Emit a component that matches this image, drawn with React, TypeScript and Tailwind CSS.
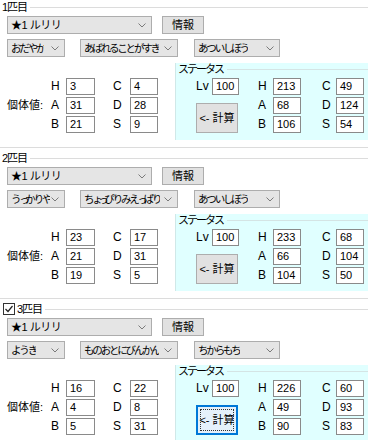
import React from "react";

type Mon = {
  no: string;
  checkbox?: boolean;
  natures: [string, string, string];
  iv: number[];
  st: number[];
  focus?: boolean;
};

const mons: Mon[] = [
  {
    no: "1匹目",
    natures: ["おだやか", "あばれることがすき", "あついしぼう"],
    iv: [3, 31, 21, 4, 28, 9],
    st: [213, 68, 106, 49, 124, 54],
  },
  {
    no: "2匹目",
    natures: ["うっかりや", "ちょっぴりみえっぱり", "あついしぼう"],
    iv: [23, 21, 19, 17, 31, 5],
    st: [233, 66, 104, 68, 104, 50],
  },
  {
    no: "3匹目",
    checkbox: true,
    natures: ["ようき", "ものおとにびんかん", "ちからもち"],
    iv: [16, 4, 5, 22, 8, 31],
    st: [226, 49, 90, 60, 93, 83],
    focus: true,
  },
];

const SMALL = "ぁぃぅぇぉっゃゅょ";

// the original font has proportional kana; fake it by squeezing, small kana more
function Kana({ text }: { text: string }) {
  return (
    <>
      {Array.from(text).map((ch, i) => (
        <span key={i} className={SMALL.includes(ch) ? "tracking-[-4.5px]" : "tracking-[-2.2px]"}>
          {ch}
        </span>
      ))}
    </>
  );
}

function Chevron() {
  return (
    <svg width="8" height="5" viewBox="0 0 8 5" className="shrink-0">
      <path d="M0.5 0.5 L4 4 L7.5 0.5" stroke="#7a7a7a" fill="none" />
    </svg>
  );
}

function Combo({ w, children, className = "" }: { w: string; children: React.ReactNode; className?: string }) {
  return (
    <div
      className={`${w} ${className} flex h-[18px] items-center justify-between border border-[#adadad] bg-[#e5e5e5] pl-[3px] pr-[5px] leading-[16px] whitespace-nowrap`}
    >
      <span className="min-w-0 overflow-hidden">{children}</span>
      <Chevron />
    </div>
  );
}

function Field({ label, value, lw, iw }: { label: string; value: number; lw: string; iw: string }) {
  return (
    <div className="flex h-[17px] items-center text-[12px]">
      <span className={`${lw} leading-[17px]`}>{label}</span>
      <div className={`${iw} h-[17px] border border-[#8a8a8a] bg-white pl-[3px] text-[11px] leading-[15px]`}>{value}</div>
    </div>
  );
}

function Section({ m }: { m: Mon }) {
  return (
    <section className="pb-[3px]">
      <div className="flex h-[14px] items-center">
        {m.checkbox && (
          <div className="ml-[3px] flex h-[12px] w-[12px] items-center justify-center border border-[#333] bg-white">
            <svg width="10" height="10" viewBox="0 0 10 10">
              <path d="M1.5 5 L4 7.5 L8.5 2" stroke="#222" strokeWidth="1.2" fill="none" />
            </svg>
          </div>
        )}
        <span className="ml-[2px] leading-[14px] tracking-[-1px]">{m.no}</span>
        <div className="ml-[3px] h-px flex-1 bg-[#dcdcdc]" />
      </div>

      <div className="mt-[2px] flex pl-[7px]">
        <Combo w="w-[145px]">
          <span className="tracking-[-0.5px]">★1 ルリリ</span>
        </Combo>
        <div className="ml-[10px] flex h-[18px] w-[42px] items-center justify-center border border-[#adadad] bg-[#e1e1e1]">
          情報
        </div>
      </div>

      <div className="mt-[5px] flex pl-[7px] text-[10.5px]">
        <Combo w="w-[58px]">
          <Kana text={m.natures[0]} />
        </Combo>
        <Combo w="w-[98px]" className="ml-[15px]">
          <Kana text={m.natures[1]} />
        </Combo>
        <Combo w="w-[86px]" className="ml-[16px]">
          <Kana text={m.natures[2]} />
        </Combo>
      </div>

      <div className="mt-[6px] flex h-[77px]">
        <div className="flex w-[175px] pl-[7px] pt-[15px]">
          <span className="mt-[19px] w-[44px] leading-[17px]">個体値:</span>
          <div className="flex flex-col gap-[2px]">
            <Field label="H" value={m.iv[0]} lw="w-[15px]" iw="w-[29px]" />
            <Field label="A" value={m.iv[1]} lw="w-[15px]" iw="w-[29px]" />
            <Field label="B" value={m.iv[2]} lw="w-[15px]" iw="w-[29px]" />
          </div>
          <div className="ml-[18px] flex flex-col gap-[2px]">
            <Field label="C" value={m.iv[3]} lw="w-[17px]" iw="w-[28px]" />
            <Field label="D" value={m.iv[4]} lw="w-[17px]" iw="w-[28px]" />
            <Field label="S" value={m.iv[5]} lw="w-[17px]" iw="w-[28px]" />
          </div>
        </div>

        <div className="flex-1 border-l border-[#d0e8e8] bg-[#e0ffff]">
          <div className="flex h-[12px] items-center">
            <span className="pl-[2px] leading-[12px] tracking-[-2px]">ステータス</span>
            <div className="ml-[4px] h-px flex-1 bg-[#d4e4e4]" />
          </div>
          <div className="mt-[3px] flex pl-[20px]">
            <div className="flex flex-col">
              <Field label="Lv" value={100} lw="w-[16px]" iw="w-[27px]" />
              <div
                className={
                  m.focus
                    ? "mt-[8px] flex h-[30px] w-[42px] items-center justify-center whitespace-nowrap border-2 border-[#0078d7] bg-[#e5f1fb] outline-1 outline-dotted outline-offset-[-5px] outline-[#333]"
                    : "mt-[8px] flex h-[30px] w-[42px] items-center justify-center whitespace-nowrap border border-[#adadad] bg-[#e1e1e1]"
                }
              >
                &lt;- 計算
              </div>
            </div>
            <div className="ml-[19px] flex flex-col gap-[2px]">
              <Field label="H" value={m.st[0]} lw="w-[15px]" iw="w-[28px]" />
              <Field label="A" value={m.st[1]} lw="w-[15px]" iw="w-[28px]" />
              <Field label="B" value={m.st[2]} lw="w-[15px]" iw="w-[28px]" />
            </div>
            <div className="ml-[21px] flex flex-col gap-[2px]">
              <Field label="C" value={m.st[3]} lw="w-[14px]" iw="w-[28px]" />
              <Field label="D" value={m.st[4]} lw="w-[14px]" iw="w-[28px]" />
              <Field label="S" value={m.st[5]} lw="w-[14px]" iw="w-[28px]" />
            </div>
          </div>
        </div>
      </div>

      <div className="mt-[7px] h-px bg-[#dcdcdc]" />
    </section>
  );
}

export default function App() {
  return (
    <div className="h-[440px] w-[368px] overflow-hidden bg-white font-['Liberation_Sans','Noto_Sans_CJK_JP',sans-serif] text-[11px] text-black">
      {mons.map((m) => (
        <Section key={m.no} m={m} />
      ))}
    </div>
  );
}
